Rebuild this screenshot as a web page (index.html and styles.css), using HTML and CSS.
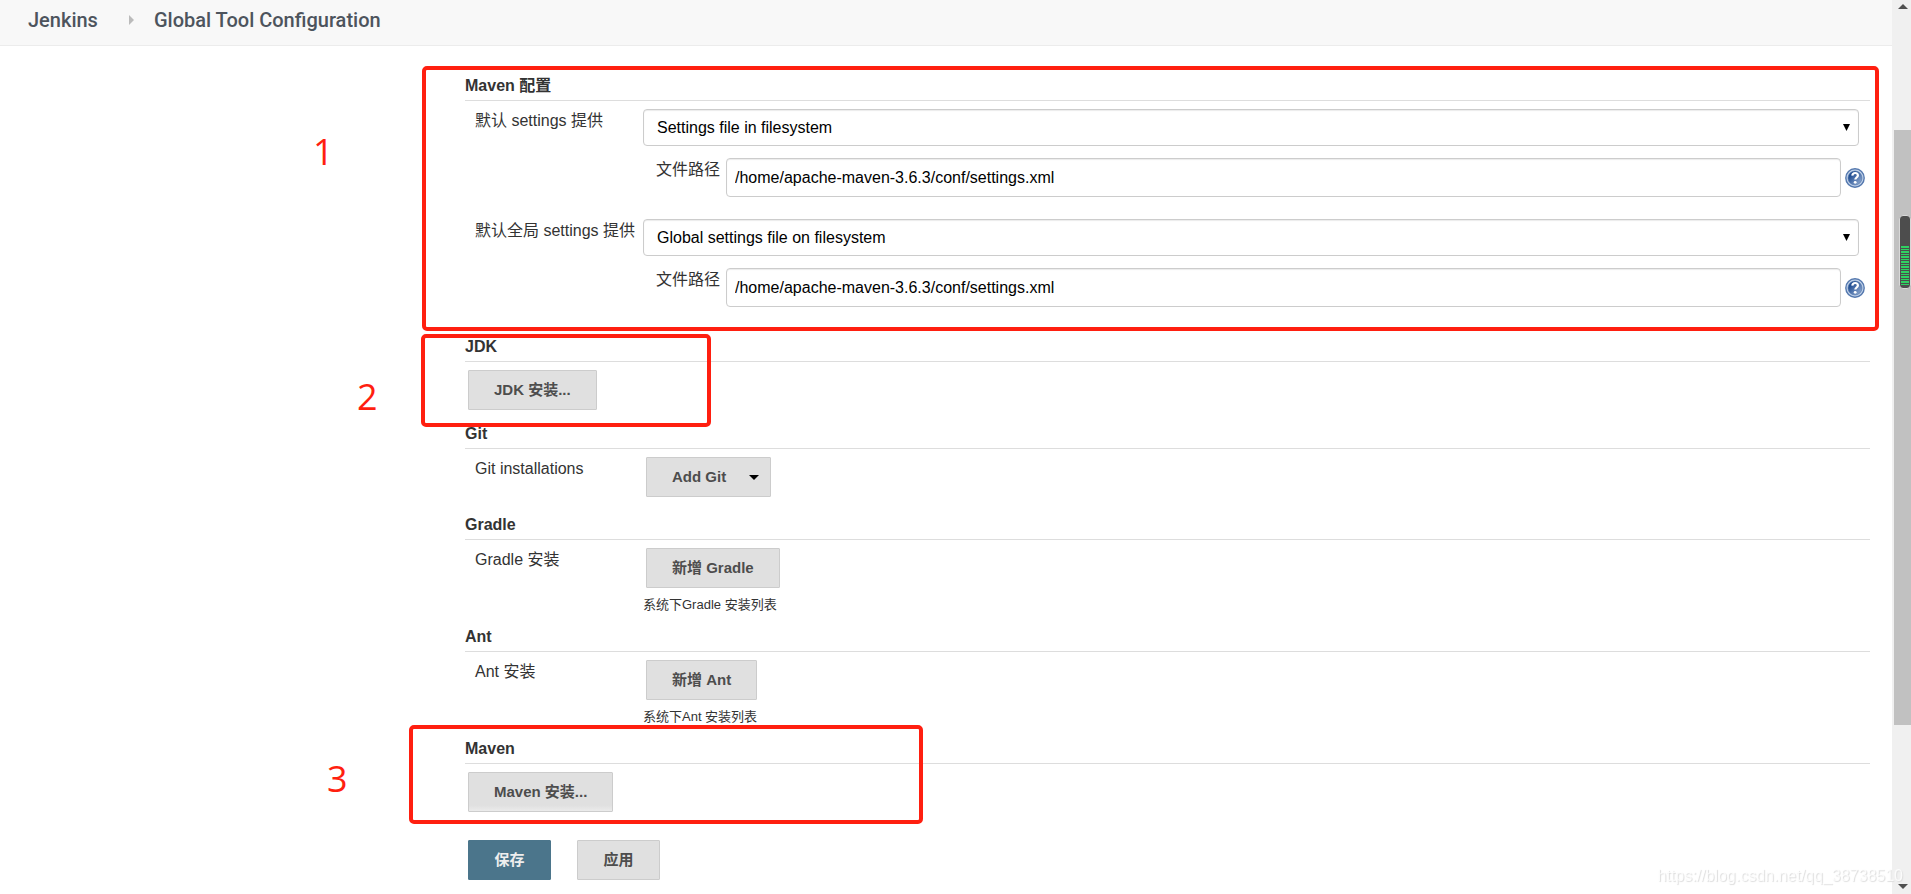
FILE: index.html
```html
<!DOCTYPE html>
<html lang="zh-CN">

<head>
  <meta charset="UTF-8" />
  <meta name="viewport" content="width=device-width, initial-scale=1.0" />
  <title>Global Tool Configuration [Jenkins]</title>
  <link rel="stylesheet" href="styles.css">
</head>

<body>
  <!-- Help icon shared by the path fields -->
  <svg class="sprite" aria-hidden="true">
    <defs>
      <linearGradient id="help-fill" x1="0" y1="0" x2="1" y2="1">
        <stop offset="0.25" stop-color="#234f93" />
        <stop offset="1" stop-color="#9fb6d8" />
      </linearGradient>
      <symbol id="help" viewBox="0 0 20 20">
        <circle cx="10" cy="10" r="9.2" fill="#c3d3e9" stroke="#5478ae" stroke-width="1.4" />
        <circle cx="10" cy="10" r="7" fill="url(#help-fill)" stroke="#4a70a8" stroke-width="0.6" />
        <path d="M7.3 7.6C7.5 5.7 8.6 5 10.1 5c1.7 0 2.8 1 2.8 2.4 0 2-2.6 2.2-2.6 4.1" fill="none" stroke="#fff" stroke-width="2.2" />
        <circle cx="10.2" cy="14.3" r="1.4" fill="#fff" />
      </symbol>
    </defs>
  </svg>

  <header class="breadcrumbs">
    <a href="#">Jenkins</a>
    <span class="crumb-arrow"></span>
    <a href="#">Global Tool Configuration</a>
  </header>

  <main class="config">
    <section class="section section-settings">
      <h2>Maven 配置</h2>
      <div class="row">
        <label for="settings">默认 settings 提供</label>
        <div class="control">
          <div class="select-wrap">
            <select id="settings">
              <option>Settings file in filesystem</option>
            </select>
          </div>
          <div class="sub-row">
            <label for="settings-path">文件路径</label>
            <input id="settings-path" type="text" value="/home/apache-maven-3.6.3/conf/settings.xml">
            <a class="help" href="#" aria-label="Help"><svg><use href="#help" /></svg></a>
          </div>
        </div>
      </div>
      <div class="row">
        <label for="global-settings">默认全局 settings 提供</label>
        <div class="control">
          <div class="select-wrap">
            <select id="global-settings">
              <option>Global settings file on filesystem</option>
            </select>
          </div>
          <div class="sub-row">
            <label for="global-path">文件路径</label>
            <input id="global-path" type="text" value="/home/apache-maven-3.6.3/conf/settings.xml">
            <a class="help" href="#" aria-label="Help"><svg><use href="#help" /></svg></a>
          </div>
        </div>
      </div>
      <span class="mark mark-1">1</span>
      <div class="frame frame-1"></div>
    </section>

    <section class="section">
      <h2>JDK</h2>
      <button type="button" class="btn">JDK 安装...</button>
      <span class="mark mark-2">2</span>
      <div class="frame frame-2"></div>
    </section>

    <section class="section section-git">
      <h2>Git</h2>
      <div class="row">
        <span class="row-name">Git installations</span>
        <div class="control">
          <button type="button" class="btn btn-menu">Add Git</button>
        </div>
      </div>
    </section>

    <section class="section">
      <h2>Gradle</h2>
      <div class="row">
        <span class="row-name">Gradle 安装</span>
        <div class="control">
          <button type="button" class="btn">新增 Gradle</button>
          <p class="desc">系统下Gradle 安装列表</p>
        </div>
      </div>
    </section>

    <section class="section">
      <h2>Ant</h2>
      <div class="row">
        <span class="row-name">Ant 安装</span>
        <div class="control">
          <button type="button" class="btn">新增 Ant</button>
          <p class="desc">系统下Ant 安装列表</p>
        </div>
      </div>
    </section>

    <section class="section section-maven">
      <h2>Maven</h2>
      <button type="button" class="btn btn-fade">Maven 安装...</button>
      <span class="mark mark-3">3</span>
      <div class="frame frame-3"></div>
    </section>

    <div class="actions">
      <button type="submit" class="btn btn-primary">保存</button>
      <button type="button" class="btn">应用</button>
    </div>
  </main>

  <!-- Scrollbar -->
  <div class="scrollbar">
    <span class="scroll-up"></span>
    <div class="track">
      <div class="thumb"></div>
    </div>
    <span class="scroll-down"></span>
  </div>
  <div class="meter"><div class="meter-level"></div></div>

  <span class="watermark">https://blog.csdn.net/qq_38738510</span>
</body>

</html>
```

FILE: styles.css
```css
* {
  box-sizing: border-box;
}

body {
  margin: 0;
  min-height: 100vh;
  overflow: hidden;
  background: #fff;
  color: #333;
  font-family: "Liberation Sans", "Noto Sans CJK SC", sans-serif;
  font-size: 16px;
  line-height: 24px;
}

.sprite {
  position: absolute;
  width: 0;
  height: 0;
}

.breadcrumbs {
  display: flex;
  align-items: center;
  padding: 0 28px 5px;
  background: #f8f8f8;
  border-bottom: 1px solid #ececec;
  font-family: Roboto, sans-serif;
  font-size: 20px;
  font-weight: 500;
  line-height: 40px;
}

.breadcrumbs a {
  color: #4d545d;
  text-decoration: none;
}

.crumb-arrow {
  margin: 0 20px 0 31px;
  border: 5px solid transparent;
  border-left-color: #bbb;
  border-right: 0;
}

.config {
  padding: 28px 41px 0 465px;
}

.section {
  position: relative;
  margin-bottom: 12px;
}

.section-settings,
.section-maven {
  margin-bottom: 28px;
}

.section-git {
  margin-bottom: 16px;
}

h2 {
  margin: 0 0 8px;
  padding-bottom: 2px;
  border-bottom: 1px solid #ddd;
  font-size: 16px;
  line-height: 24px;
}

.row {
  display: grid;
  grid-template-columns: 168px 1fr;
  padding-left: 10px;
}

.row + .row {
  margin-top: 22px;
}

.row > label,
.sub-row > label {
  white-space: nowrap;
}

.select-wrap {
  position: relative;
  margin-right: 11px;
}

.select-wrap::after {
  content: "";
  position: absolute;
  top: 15px;
  right: 9px;
  width: 7px;
  height: 7px;
  background: #000;
  clip-path: polygon(0 0, 100% 0, 50% 100%);
  pointer-events: none;
}

select,
input {
  border: 1px solid #ccc;
  border-radius: 4px;
  background: #fff;
  box-shadow: inset 0 1px 1px rgba(0, 0, 0, 0.08);
  color: #000;
  font: inherit;
}

select {
  display: block;
  width: 100%;
  height: 37px;
  padding: 0 13px;
  appearance: none;
}

.sub-row {
  display: flex;
  margin: 12px 5px 0 13px;
}

.sub-row input {
  flex: 1;
  height: 39px;
  margin: 0 4px 0 6px;
  padding: 0 8px;
}

.help {
  align-self: center;
  height: 20px;
}

.help svg {
  display: block;
  width: 20px;
  height: 20px;
}

.btn {
  display: block;
  height: 40px;
  margin: 0 3px;
  padding: 0 25px;
  border: 1px solid #ccc;
  border-radius: 1px;
  background: #e0e0e0;
  color: #4d4d4d;
  font: bold 15px/20px "Liberation Sans", "Noto Sans CJK SC", sans-serif;
  cursor: pointer;
}

.btn-menu {
  display: flex;
  align-items: center;
  gap: 23px;
  padding-right: 11px;
}

.btn-menu::after {
  content: "";
  border: 5px solid transparent;
  border-top-color: #000;
  border-bottom: 0;
}

.btn-fade {
  background: linear-gradient(#e0e0e0 85%, #ebebeb);
}

.btn-primary {
  border-color: #4b758b;
  background: #4b758b;
  color: #eee;
}

.desc {
  margin: 8px 0 0;
  font-size: 13px;
  line-height: 18px;
}

.desc:last-child {
  margin-bottom: -1px;
}

.actions {
  display: flex;
  gap: 20px;
}

.actions .btn {
  min-width: 83px;
}

/* Red notes over the form */
.frame {
  position: absolute;
  border: 4px solid #ff1f10;
  border-radius: 5px;
  pointer-events: none;
}

.frame-1 {
  inset: -8px -9px -24px -43px;
}

.frame-2 {
  inset: -1px auto -17px -44px;
  width: 290px;
}

.frame-3 {
  inset: -12px auto -12px -56px;
  width: 514px;
}

.mark {
  position: absolute;
  color: #ff1f10;
  font-family: "Open Sans", sans-serif;
  font-size: 36px;
  line-height: 36px;
}

.mark-1 {
  top: 60px;
  left: -152px;
}

.mark-2 {
  top: 44px;
  left: -108px;
}

.mark-3 {
  top: 24px;
  left: -138px;
}

.scrollbar {
  position: fixed;
  inset: 0 0 0 auto;
  display: flex;
  flex-direction: column;
  align-items: center;
  width: 19px;
  padding: 4px 0 5px 2px;
  background: #f0f0f0;
}

.scroll-up,
.scroll-down {
  border: 5px solid transparent;
}

.scroll-up {
  border-top: 0;
  border-bottom-color: #505050;
}

.scroll-down {
  border-bottom: 0;
  border-top-color: #505050;
}

.track {
  flex: 1;
  align-self: stretch;
  padding: 121px 0 0;
}

.thumb {
  height: 68%;
  min-height: 595px;
  background: #c1c1c1;
}

.meter {
  position: fixed;
  top: 215px;
  right: 0;
  display: flex;
  align-items: flex-end;
  width: 12px;
  height: 74px;
  padding: 2px 1px;
  border: 1px solid #d8d8d8;
  border-radius: 4px;
  background: #4d4d4d;
}

.meter-level {
  width: 100%;
  height: 40px;
  background: repeating-linear-gradient(#2fd162 0 2px, #4d4d4d 2px 3px, #2fd162 3px 4px, #4d4d4d 4px 5px);
}

.watermark {
  position: fixed;
  right: 8px;
  bottom: 6px;
  color: rgba(255, 255, 255, 0.8);
  text-shadow: 1px 1px 1px #ddd;
}
```
